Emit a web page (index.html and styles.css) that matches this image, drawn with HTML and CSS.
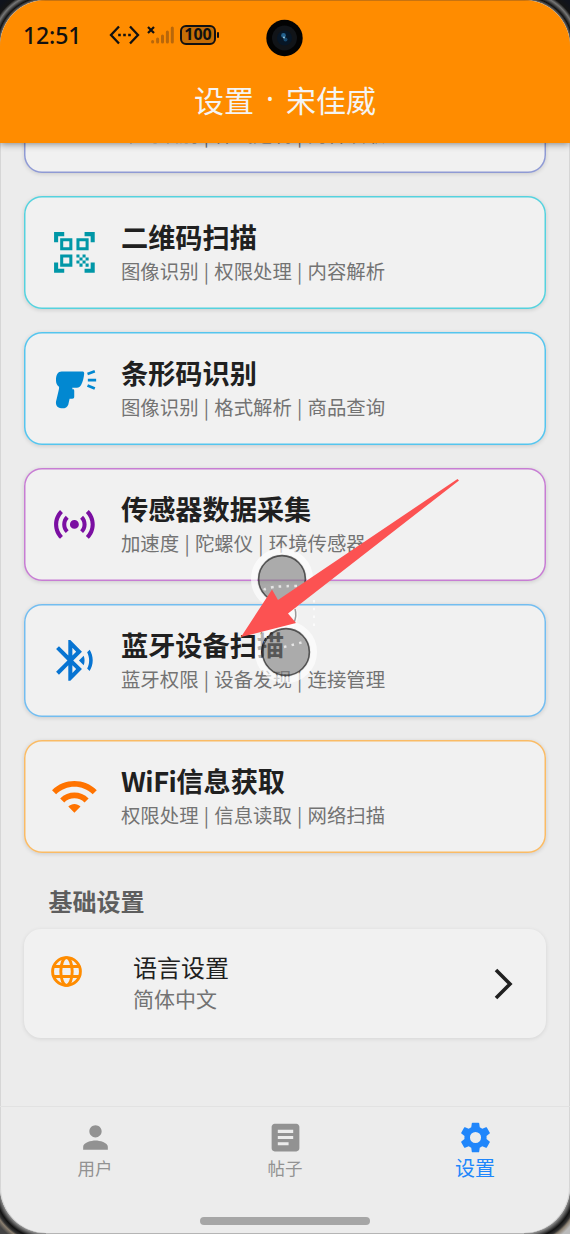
FILE: index.html
```html
<!DOCTYPE html>
<html lang="zh-CN">
<head>
<meta charset="utf-8">
<title>设置</title>
<link rel="stylesheet" href="styles.css">
</head>
<body>
<div class="phone">
  <div class="screen">
    <header class="header">
      <div class="status">
        <span class="time">12:51</span>
        <svg class="st-debug" width="31" height="20" viewBox="0 0 31 20" fill="none" stroke="#111" stroke-width="2.300"><path d="M10 1.500 2 10l8 8.500M21 1.500l8 8.500-8 8.500"/><path d="M9.200 10h2.600m2.400 0h2.600m2.400 0h2.600" stroke-width="2.600"/></svg>
        <svg class="st-signal" width="27" height="20" viewBox="0 0 27 20"><path d="M1 2l6 6M7 2 1 8" stroke="#111" stroke-width="2.200"/><g stroke="#b8670a" stroke-width="3" stroke-linecap="round"><path d="M5.600 16.500v.5M10.600 14v3M15.500 11v6M20.400 7v10M25.300 3v14"/></g></svg>
        <span class="battery">100</span><i class="battery-cap"></i>
      </div>
      <h1 class="title"><span>设置</span><span class="dot">·</span><span>宋佳威</span></h1>
    </header>
    <svg class="camera" width="38" height="38" viewBox="0 0 38 38"><circle cx="18.500" cy="19" r="18.200" fill="#030303"/><circle cx="18.500" cy="19" r="12.500" fill="#111418"/><circle cx="18.500" cy="19" r="7.500" fill="#071626"/><circle cx="17.500" cy="16.500" r="2.400" fill="#24618d"/><circle cx="19.500" cy="20.500" r="2" fill="#17496f"/><circle cx="18" cy="18.500" r=".9" fill="#a9d4ea"/></svg>

    <main class="content">
      <div class="list">
        <section class="card indigo peek">
          <div class="text"><p>编码识别 | 样式定制 | 内容读取</p></div>
        </section>
        <section class="card cyan">
          <svg class="icon" viewBox="0 0 24 24"><path d="M9.500 6.500v3h-3v-3h3M11 5H5v6h6V5zM9.500 14.500v3h-3v-3h3M11 13H5v6h6v-6zM17.500 6.500v3h-3v-3h3M19 5h-6v6h6V5zM13 13h1.500v1.500H13zM14.500 14.500H16V16h-1.500zM16 13h1.500v1.500H16zM13 16h1.500v1.500H13zM14.500 17.500H16V19h-1.500zM16 16h1.500v1.500H16zM17.500 14.500H19V16h-1.500zM17.500 17.500H19V19h-1.500zM22 7h-2V4h-3V2h5v5zM22 22v-5h-2v3h-3v2h5zM2 22h5v-2H4v-3H2v5zM2 2v5h2V4h3V2H2z" fill-rule="evenodd"/></svg>
          <div class="text"><h2>二维码扫描</h2><p>图像识别 | 权限处理 | 内容解析</p></div>
        </section>
        <section class="card sky">
          <svg class="icon" viewBox="90 103.500 147 147"><path d="M125 126h62c4 0 6 2 6 6-1 13-4 24-9 34-3 6-7 9-13 9h-14l1 5c4-1 5 1 5 5v17c0 4-2 6-6 6h-8l-4 18c-3 8-10 12-21 11-12-2-17-9-16-20l8-34c1-4 2-8 1-11-6-4-9-10-9-20 0-16 6-26 17-26z"/><path d="M203 133.500l22-8M204 152h25M203 168l22 9.500" fill="none" stroke="currentColor" stroke-width="8"/></svg>
          <div class="text"><h2>条形码识别</h2><p>图像识别 | 格式解析 | 商品查询</p></div>
        </section>
        <section class="card purple">
          <svg class="icon" viewBox="0 0 24 24"><path d="M7.760 16.240C6.670 15.160 6 13.660 6 12s.67-3.160 1.760-4.240l1.420 1.420C8.450 9.900 8 10.900 8 12s.45 2.100 1.170 2.830zM16.240 16.240C17.330 15.160 18 13.660 18 12s-.67-3.160-1.760-4.240l-1.420 1.420C15.550 9.900 16 10.900 16 12s-.45 2.100-1.170 2.830zM12 9.800a2.200 2.200 0 100 4.400 2.200 2.200 0 000-4.400zM20 12c0 2.210-.9 4.210-2.350 5.650l1.420 1.420C20.880 17.260 22 14.760 22 12s-1.120-5.260-2.930-7.070l-1.420 1.420C19.100 7.790 20 9.790 20 12zM6.350 6.350 4.930 4.930C3.120 6.740 2 9.240 2 12s1.120 5.260 2.930 7.070l1.420-1.420C4.900 16.210 4 14.210 4 12s.9-4.210 2.350-5.650z"/></svg>
          <div class="text"><h2>传感器数据采集</h2><p>加速度 | 陀螺仪 | 环境传感器</p></div>
        </section>
        <section class="card blue">
          <svg class="icon" viewBox="0 0 24 24"><path d="M14.240 12.010l2.320 2.320c.28-.72.44-1.510.44-2.330 0-.82-.16-1.590-.43-2.310zM19.530 6.710l-1.260 1.260c.63 1.210.98 2.570.98 4.020s-.36 2.820-.98 4.020l1.200 1.200c.97-1.540 1.540-3.360 1.540-5.310-.01-1.890-.55-3.670-1.480-5.190zM15.710 7.710 10 2H9v7.590L4.410 5 3 6.410 8.590 12 3 17.590 4.410 19 9 14.410V22h1l5.710-5.710-4.300-4.290zM11 5.830l1.880 1.880L11 9.590zM12.880 16.290 11 18.170v-3.760z"/></svg>
          <div class="text"><h2>蓝牙设备扫描</h2><p>蓝牙权限 | 设备发现 | 连接管理</p></div>
        </section>
        <section class="card orange">
          <svg class="icon" viewBox="0 0 24 24"><path d="M1 9l2 2c4.970-4.970 13.030-4.970 18 0l2-2C16.930 2.930 7.080 2.930 1 9zM9 17l3 3 3-3c-1.650-1.660-4.340-1.660-6 0zM5 13l2 2c2.760-2.760 7.240-2.760 10 0l2-2C15.140 9.140 8.870 9.140 5 13z"/></svg>
          <div class="text"><h2><span class="latin">WiFi</span>信息获取</h2><p>权限处理 | 信息读取 | 网络扫描</p></div>
        </section>
      </div>
      <h3 class="section-title">基础设置</h3>
      <section class="setting">
        <svg class="globe" viewBox="0 0 31 31" fill="none" stroke="#ff8c00" stroke-width="2.900"><circle cx="15.500" cy="15.500" r="13.900"/><ellipse cx="15.500" cy="15.500" rx="5.700" ry="13.900"/><path d="M2.500 10.500h26M2.500 20.500h26"/></svg>
        <div class="setting-text"><h4>语言设置</h4><p>简体中文</p></div>
        <svg class="chevron" width="20" height="32" viewBox="0 0 20 32" fill="none" stroke="#202020" stroke-width="3.600"><path d="M2 2l14 14L2 30"/></svg>
      </section>
    </main>

    <nav class="nav">
      <div class="tab"><svg viewBox="0 0 24 24"><path d="M12 12c2.210 0 4-1.790 4-4s-1.790-4-4-4-4 1.790-4 4 1.790 4 4 4zm0 2c-2.670 0-8 1.340-8 4v2h16v-2c0-2.660-5.330-4-8-4z"/></svg><span>用户</span></div>
      <div class="tab"><svg viewBox="0 0 24 24"><path d="M19 3H5c-1.100 0-2 .9-2 2v14c0 1.100.9 2 2 2h14c1.100 0 2-.9 2-2V5c0-1.100-.9-2-2-2zm-5 14H7v-2h7v2zm3-4H7v-2h10v2zm0-4H7V7h10v2z"/></svg><span>帖子</span></div>
      <div class="tab active"><svg viewBox="0 0 24 24"><path d="M19.140 12.940c.04-.3.060-.61.060-.94 0-.32-.02-.64-.07-.94l2.030-1.580c.18-.14.23-.41.12-.61l-1.920-3.320c-.12-.22-.37-.29-.59-.22l-2.390.96c-.5-.38-1.030-.7-1.620-.94l-.36-2.540c-.04-.24-.24-.41-.48-.41h-3.840c-.24 0-.43.17-.47.41l-.36 2.540c-.59.24-1.130.57-1.620.94l-2.390-.96c-.22-.08-.47 0-.59.22L2.740 8.870c-.12.21-.08.47.12.61l2.030 1.580c-.05.3-.09.63-.09.94s.02.64.07.94l-2.030 1.580c-.18.14-.23.41-.12.61l1.920 3.320c.12.22.37.29.59.22l2.390-.96c.5.38 1.030.7 1.620.94l.36 2.540c.05.24.24.41.48.41h3.840c.24 0 .44-.17.47-.41l.36-2.540c.59-.24 1.130-.56 1.620-.94l2.390.96c.22.08.47 0 .59-.22l1.920-3.320c.12-.22.07-.47-.12-.61zM12 15.600a3.600 3.600 0 110-7.200 3.600 3.600 0 010 7.200z"/></svg><span>设置</span></div>
    </nav>
    <div class="home-bar"></div>

    <svg class="touches" viewBox="230 470 240 220">
      <g fill="none" stroke="#fff" stroke-opacity=".65" stroke-width="6"><circle cx="282" cy="579" r="28"/><circle cx="286" cy="652" r="28"/></g>
      <circle cx="284" cy="616" r="14" fill="#fff" fill-opacity=".6"/>
      <path d="M295 609q2 6-1 14" stroke="#999" stroke-width="1.500" fill="none"/>
      <g fill="#7d7d7d" fill-opacity=".6" stroke="#353535" stroke-opacity=".8" stroke-width="1.600"><circle cx="282" cy="579" r="23.400"/><circle cx="286" cy="652" r="23.400"/></g>
      <g fill="none" stroke="#fff" stroke-opacity=".7" stroke-width="2.500" stroke-dasharray="2.500 5.300"><path d="M264 590q3-4 34-4"/><path d="M284 647l12-3 7-2"/><path d="M314 600v30" stroke-width="2"/></g>
      <path d="M241 637 272 589.500 278 600 457.500 479l1.500 1.500L288 613.500l8 9.500z" fill="#fc5252"/>
    </svg>
  </div>
</div>
</body>
</html>
```

FILE: styles.css
```css
* { box-sizing: border-box; }
body {
  margin: 0;
  font-family: "Noto Sans CJK SC", sans-serif;
  color: #202020;
}
h1, h2, h3, h4, p { margin: 0; }

.phone {
  width: 570px;
  height: 1234px;
  overflow: hidden;
  background:
    radial-gradient(circle at 46px 46px, transparent 44px, #111 49px, #777 53px, #151515 56px, #10131c 62px) 0 0 / 46px 46px no-repeat,
    radial-gradient(circle at 0 46px, transparent 44px, #111 49px, #777 53px, #151515 56px, #10131c 62px) 100% 0 / 46px 46px no-repeat,
    radial-gradient(circle at 46px 0, transparent 44px, #111 51px, #333 54px, #8a7f70 56px, #444 60px) 0 100% / 46px 46px no-repeat,
    radial-gradient(circle at 0 0, transparent 44px, #111 51px, #333 54px, #8a7f70 56px, #bbb 60px) 100% 100% / 46px 46px no-repeat,
    #b5b5b5;
}
.screen {
  position: relative;
  display: flex;
  flex-direction: column;
  height: 1233px;
  border-radius: 46px;
  overflow: hidden;
  background: #ececec;
  box-shadow: inset 1px 0 #d6d6d6, inset -1px 0 #d6d6d6;
}

.header {
  position: relative;
  z-index: 1;
  flex: none;
  height: 143px;
  border-top: 1px solid #c87310;
  background: #ff8c00;
  box-shadow: 0 1px 7px rgba(0, 0, 0, .45);
}
.status {
  display: flex;
  align-items: center;
  height: 68px;
  padding: 0 0 0 23px;
}
.time {
  width: 86px;
  font: 500 23px/30px "Noto Sans", sans-serif;
  letter-spacing: -.1px;
  color: #111;
}
.st-signal { margin: 0 6px 0 7px; }
.battery {
  width: 36px;
  height: 20px;
  border: 2px solid #111;
  border-radius: 6px;
  background: #c66e06;
  font: 700 16px/15px "Noto Sans", sans-serif;
  text-align: center;
  color: #111;
}
.battery-cap {
  width: 2px;
  height: 6px;
  margin-left: 1px;
  border-radius: 1px;
  background: #111;
}
.title {
  display: flex;
  justify-content: center;
  height: 62px;
  font-size: 30px;
  font-weight: 400;
  line-height: 60px;
  color: #f4f4f4;
}
.dot {
  width: 32px;
  font-family: "Noto Sans", sans-serif;
  text-align: center;
}
.camera {
  position: absolute;
  z-index: 2;
  left: 266px;
  top: 19px;
}

.content {
  flex: 1;
  min-height: 0;
  overflow: hidden;
  padding: 0 24px;
}
.list {
  display: flex;
  flex-direction: column;
  gap: 23px;
  margin-top: -83px;
}
.card {
  display: flex;
  align-items: center;
  gap: 22px;
  height: 113px;
  padding-left: 26px;
  border-radius: 18px;
  background: #f1f1f1;
  box-shadow: inset 0 0 0 1.500px var(--edge), 0 1px 4px rgba(0, 0, 0, .14);
}
.peek {
  padding: 33px 0 0 97px;
}
.icon {
  flex: none;
  width: 48.800px;
  height: 48.800px;
  margin-right: .2px;
  color: var(--tint);
  fill: currentColor;
}
.indigo { --edge: #8f9ad4; --tint: #3949ab; }
.cyan { --edge: #55d2de; --tint: #0097a7; }
.sky { --edge: #55c5ee; --tint: #0288d1; }
.purple { --edge: #c77dd3; --tint: #7b0fa2; }
.blue { --edge: #73bdf0; --tint: #0774d2; }
.orange { --edge: #fabb65; --tint: #ff7300; }
.text h2 {
  margin-top: -1px;
  font-size: 27.200px;
  font-weight: 700;
  line-height: 36px;
}
.latin { letter-spacing: -.5px; }
.text p {
  padding-top: 1px;
  font-size: 19.400px;
  line-height: 32px;
  word-spacing: .9px;
  white-space: nowrap;
  color: #737373;
}

.section-title {
  margin: 30px 0 10px;
  padding-left: 24.500px;
  font-size: 24px;
  line-height: 36px;
  color: #5e5e5e;
}
.setting {
  display: flex;
  align-items: center;
  height: 109px;
  padding: 0 32px 0 27px;
  border-radius: 17px;
  background: #f1f1f1;
  box-shadow: 0 1px 4px rgba(0, 0, 0, .1);
}
.globe {
  align-self: flex-start;
  width: 31px;
  height: 31px;
  margin: 27px 51px 0 0;
}
.setting-text {
  flex: 1;
  padding-bottom: 3px;
}
.setting-text h4 {
  font-size: 24px;
  font-weight: 400;
  line-height: 32px;
}
.setting-text p {
  font-size: 21px;
  line-height: 30px;
  color: #737373;
}

.nav {
  display: flex;
  flex: none;
  height: 111px;
  border-top: 1px solid #e2e2e2;
}
.tab {
  display: flex;
  flex: 1;
  flex-direction: column;
  align-items: center;
  padding-top: 12px;
  font-size: 17.500px;
  line-height: 24px;
  color: #929292;
}
.tab svg {
  width: 37px;
  height: 37px;
  fill: currentColor;
}
.tab.active {
  font-size: 20px;
  line-height: 23px;
  color: #2086fb;
}
.home-bar {
  flex: none;
  width: 170px;
  height: 8px;
  margin: 0 auto 8px;
  border-radius: 4px;
  background: #a6a6a6;
}
.touches {
  position: absolute;
  z-index: 2;
  left: 230px;
  top: 470px;
  width: 240px;
  height: 220px;
}
```
